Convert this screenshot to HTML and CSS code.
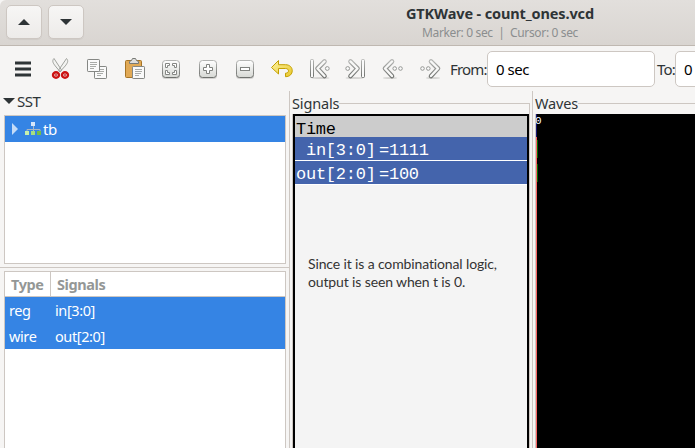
FILE: index.html
```html
<!DOCTYPE html>
<html lang="en">
<head>
<meta charset="utf-8">
<title>GTKWave - count_ones.vcd</title>
<link rel="stylesheet" href="styles.css">
</head>
<body>
<svg class="defs" width="0" height="0" aria-hidden="true">
  <defs>
    <linearGradient id="metal" x1="0" y1="0" x2="0" y2="1"><stop offset="0" stop-color="#fff"/><stop offset="1" stop-color="#d6d8d4"/></linearGradient>
    <linearGradient id="edge" x1="0" y1="0" x2="0" y2="1"><stop offset="0" stop-color="#b4b5b3"/><stop offset="1" stop-color="#6f716e"/></linearGradient>
    <linearGradient id="gold" x1="0" y1="0" x2="1" y2="1"><stop offset="0" stop-color="#fdf3a0"/><stop offset="1" stop-color="#e9c72c"/></linearGradient>
    <g id="page"><rect x=".5" y=".5" width="12" height="12" rx=".7" fill="#fafafa" stroke="#858784"/><path d="M3 3.500h7M3 5.500h7M3 7.500h6M3 9.500h4" stroke="#a9aba8" stroke-width="1"/></g>
    <g id="plate"><rect x="3" y="4" width="18" height="18" rx="3.500" fill="#d3d2d0"/><rect x="3.500" y="3.500" width="17" height="17" rx="3" fill="url(#metal)" stroke="url(#edge)"/></g>
    <g id="skip">
      <ellipse cx="13.500" cy="21" rx="9" ry="1" fill="#d5d4d2"/>
      <path d="M17.500 4.500 10.500 11.500l7 7.500" fill="none" stroke="url(#edge)" stroke-width="4.600" stroke-linecap="round" stroke-linejoin="round"/>
      <path d="M17.500 4.500 10.500 11.500l7 7.500" fill="none" stroke="#f8f8f7" stroke-width="2.400" stroke-linecap="round" stroke-linejoin="round"/>
      <rect x="3.500" y="2.500" width="3" height="18" rx="1" fill="#fafafa" stroke="url(#edge)"/>
      <circle cx="20.300" cy="11.500" r="1.900" fill="#fafafa" stroke="#969895"/>
    </g>
    <g id="step">
      <ellipse cx="9" cy="21" rx="7" ry="1" fill="#d5d4d2"/>
      <path d="M11 4.500 4 11.500l7 7.500" fill="none" stroke="url(#edge)" stroke-width="4.600" stroke-linecap="round" stroke-linejoin="round"/>
      <path d="M11 4.500 4 11.500l7 7.500" fill="none" stroke="#f8f8f7" stroke-width="2.400" stroke-linecap="round" stroke-linejoin="round"/>
      <circle cx="13.700" cy="11.500" r="1.800" fill="#fafafa" stroke="#969895"/>
      <circle cx="19.500" cy="11.500" r="1.800" fill="#fafafa" stroke="#969895"/>
    </g>
  </defs>
</svg>
<div class="window">
  <header class="titlebar">
    <div class="nav">
      <button class="nav-btn"><svg width="12" height="6"><path d="M0 6 6 0l6 6z"/></svg></button>
      <button class="nav-btn"><svg width="12" height="6"><path d="M0 0h12L6 6z"/></svg></button>
    </div>
    <div class="titles">
      <div class="title">GTKWave - count_ones.vcd</div>
      <div class="subtitle">Marker: 0 sec&nbsp; | &nbsp;Cursor: 0 sec</div>
    </div>
  </header>

  <div class="toolbar">
    <svg class="icon" viewBox="0 0 24 24"><path d="M4 6h16M4 12h16M4 18h16" stroke="#2e3436" stroke-width="3"/></svg>
    <svg class="icon" viewBox="0 0 24 24">
      <path d="M6 1.500c-2.500 2.500-.6 5 1.300 7.500l5 6 1.200-2zM18.500 1.500c2.500 2.500.6 5-1.300 7.500l-5.500 6-1-2z" fill="#f3f3f1" stroke="#a0a29d"/>
      <ellipse cx="8" cy="18" rx="3" ry="2.800" fill="#f5dcdc" stroke="#cc1212" stroke-width="2.400"/><ellipse cx="17" cy="18" rx="3" ry="2.800" fill="#f5dcdc" stroke="#cc1212" stroke-width="2.400"/>
      <circle cx="8" cy="18" r="1" fill="#b33"/><circle cx="17" cy="18" r="1" fill="#b33"/>
    </svg>
    <svg class="icon" viewBox="0 0 24 24"><use href="#page" x="9" y="9"/><use href="#page" x="2" y="2"/></svg>
    <svg class="icon" viewBox="0 0 24 24"><rect x="3.500" y="3.500" width="16" height="17" rx="1" fill="#e1a955" stroke="#a67426"/><path d="M7.500 6.500v-2l2-1 1-2h3l1 2 2 1v2z" fill="#dededc" stroke="#777975"/><use href="#page" x="10" y="9"/></svg>
    <svg class="icon" viewBox="0 0 24 24"><use href="#plate"/><path d="M10.500 6.500h-4v4h2v-2h2zM13.500 6.500h4v4h-2v-2h-2zM10.500 17.500h-4v-4h2v2h2zM13.500 17.500h4v-4h-2v2h-2z" fill="#fff" stroke="#858784"/></svg>
    <svg class="icon" viewBox="0 0 24 24"><use href="#plate"/><path d="M10.500 7.500h3v3h3v3h-3v3h-3v-3h-3v-3h3z" fill="#fff" stroke="#80827f"/></svg>
    <svg class="icon" viewBox="0 0 24 24"><use href="#plate"/><rect x="7.500" y="10.500" width="9" height="3" fill="#fff" stroke="#80827f"/></svg>
    <svg class="icon" viewBox="0 0 24 24"><path d="M1.500 10.500 8.500 3.500v4.200h7c9 0 9 12 0 12v-3.500c4 0 4-4.700 0-4.700h-7v5.500z" fill="url(#gold)" stroke="#c4a000" stroke-linejoin="round"/></svg>
    <svg class="icon" viewBox="0 0 24 24"><use href="#skip"/></svg>
    <svg class="icon" viewBox="0 0 24 24"><use href="#skip" transform="translate(24) scale(-1 1)"/></svg>
    <svg class="icon" viewBox="0 0 24 24"><use href="#step"/></svg>
    <svg class="icon" viewBox="0 0 24 24"><use href="#step" transform="translate(24) scale(-1 1)"/></svg>
    <label class="from">From:</label><div class="entry">0 sec</div>
    <label class="to">To:</label><div class="entry last">0</div>
  </div>

  <main class="panes">
    <section class="sidebar">
      <div class="expander"><svg width="12" height="6"><path d="M0 0h12L6 6z"/></svg><span>SST</span></div>
      <div class="tree">
        <div class="tree-row">
          <svg width="6" height="12"><path d="M0 0 6 6 0 12z" fill="#c4dbf7"/></svg>
          <svg class="module" width="17" height="14"><path d="M8.500 4v3M2 9V7.500h13V9M8.500 7v3" fill="none" stroke="#a9b7c4"/><rect x="6" y="0" width="4" height="4" fill="#d5e6fb"/><path d="M0 9h4v4H0z" fill="#c6efac"/><path d="M6 9h4v4H6z" fill="#a5dd80"/><path d="M12 9h4v4h-4z" fill="#73bd47"/></svg>
          <span>tb</span>
        </div>
      </div>
      <div class="splitter"></div>
      <div class="list">
        <div class="list-row head"><span>Type</span><span>Signals</span></div>
        <div class="list-row"><span>reg</span><span>in[3:0]</span></div>
        <div class="list-row"><span>wire</span><span>out[2:0]</span></div>
      </div>
    </section>

    <section class="frame signals">
      <div class="legend"><span>Signals</span></div>
      <div class="frame-body">
        <div class="sheet">
          <div class="time">Time</div>
          <div class="signal"><span class="name"> in[3:0]</span><span>=1111</span></div>
          <div class="signal"><span class="name">out[2:0]</span><span>=100</span></div>
          <p class="note">Since it is a combinational logic,<br><span>output is seen when t is 0.</span></p>
        </div>
      </div>
    </section>

    <section class="frame waves">
      <div class="legend"><span>Waves</span></div>
      <div class="frame-body">
        <div class="canvas">
          <div class="cursor"></div>
          <div class="traces"><div class="tick">0</div><i></i><i></i></div>
        </div>
      </div>
    </section>
  </main>
</div>
</body>
</html>
```
FILE: styles.css
```css
* { box-sizing: border-box; }
body { margin: 0; background: #f6f5f4; color: #2e3436; font: 15px/20px "Noto Sans", "Open Sans", sans-serif; overflow: hidden; }
svg { display: block; flex: none; }
.defs { position: absolute; }
.window { width: 695px; height: 448px; display: flex; flex-direction: column; overflow: hidden; white-space: nowrap; }

.titlebar { height: 46px; flex: none; display: flex; background: linear-gradient(#e2dfdc, #d9d5d1); border-bottom: 1px solid #bfb8b1; border-top-left-radius: 6px; }
.nav { display: flex; gap: 6px; padding: 5px 0 0 6px; width: 303px; flex: none; }
.nav-btn { width: 36px; height: 34px; padding: 0; border: 1px solid #cdc7c2; border-radius: 5px; background: linear-gradient(#f7f6f5, #edebe9); box-shadow: 0 1px 1px #0000000d; display: flex; align-items: center; justify-content: center; fill: #2e3436; }
.titles { width: 394px; flex: none; text-align: center; }
.title { font-weight: 700; font-size: 14.500px; line-height: 17px; margin-top: 5px; letter-spacing: -.13px; }
.subtitle { font-size: 12px; line-height: 18px; margin-top: 2px; color: #8b8e8f; letter-spacing: -.35px; }

.toolbar { height: 45px; flex: none; display: flex; padding: 5px 0 0 11px; }
.icon { width: 24px; height: 24px; margin: 6px 13px 0 0; }
.from, .to { line-height: 36px; font-size: 15px; letter-spacing: -.8px; flex: none; }
.from { width: 37px; margin-left: -5px; }
.to { width: 20px; padding-left: 2px; }
.entry { width: 168px; height: 36px; flex: none; border: 1px solid #cdc7c2; border-radius: 5px; background: #fff; color: #000; line-height: 35px; padding-left: 8px; letter-spacing: -.5px; }

.panes { flex: 1; display: flex; min-height: 0; }
.sidebar { width: 290px; flex: none; border-right: 1px solid #cdc7c2; display: flex; flex-direction: column; }
.expander { height: 24px; flex: none; display: flex; align-items: center; padding: 0 0 4px 3px; gap: 2px; fill: #2e3436; font-size: 15px; letter-spacing: -.5px; }
.tree { height: 149px; flex: none; margin: 0 3px 0 4px; border: 1px solid #cdc7c2; background: #fff; }
.tree-row { height: 26px; display: flex; align-items: center; padding-left: 7px; background: #3584e4; color: #fff; letter-spacing: -.4px; }
.module { margin: 0 1px 0 7px; }
.splitter { height: 7px; flex: none; border-bottom: 3px solid #f6f5f4; background: linear-gradient(#f6f5f4 3px, #cdc7c2 3px); }
.list { flex: 1; margin: 0 3px 0 4px; border: 1px solid #cdc7c2; border-bottom: 0; background: #fff; }
.list-row { height: 26px; display: grid; grid-template-columns: 46px 1fr; align-items: center; background: #3584e4; color: #fff; font-size: 14.500px; letter-spacing: -.4px; }
.list-row span { padding-left: 4px; line-height: 24px; }
.list-row.head { height: 25px; background: #fff; border-bottom: 1px solid #cdc7c2; color: #949796; font-weight: 700; }
.list-row.head span { padding-left: 6px; }
.head span:first-child { border-right: 1px solid #cdc7c2; }

.frame { display: flex; flex-direction: column; padding: 3px 0 0 2px; }
.signals { width: 243px; flex: none; padding-right: 2px; border-right: 1px solid #cdc7c2; }
.waves { flex: 1; }
.legend { height: 20px; flex: none; display: flex; font-size: 14.500px; line-height: 18px; letter-spacing: -.15px; }
.legend::after { content: ""; flex: 1; margin-top: 9px; border-top: 1px solid #cdc7c2; }
.signals .legend::after { border-right: 1px solid #cdc7c2; }
.frame-body { flex: 1; display: flex; border-left: 1px solid #cdc7c2; }
.signals .frame-body { border-right: 1px solid #cdc7c2; }
.sheet { flex: 1; border: 2px solid #000; border-bottom: 0; background: #f4f4f4; font: 17px/22px "Liberation Mono", monospace; }
.time { height: 21px; background: #ccc; color: #000; padding-left: 1px; line-height: 27px; letter-spacing: -.3px; }
.signal { height: 24px; background: #4464ac; color: #fff; border-bottom: 1px solid #fff; display: flex; padding-left: 1px; line-height: 27px; white-space: pre; letter-spacing: -.25px; }
.name { width: 83px; }
.note { margin: 70px 0 0 13px; color: #333; font: 14px/18px Lato, "Open Sans", sans-serif; letter-spacing: -.13px; }
.canvas { flex: 1; display: flex; background: #000; overflow: hidden; }
.cursor { width: 1px; background: linear-gradient(#161672 23px, #ff6666 23px); }
.traces { color: #fff; }
.tick { height: 26px; font: 11px/14px "Liberation Mono", monospace; margin-left: -2px; }
.traces i { display: block; width: 1px; height: 18px; margin-bottom: 6px; background: #006b00; }
```
